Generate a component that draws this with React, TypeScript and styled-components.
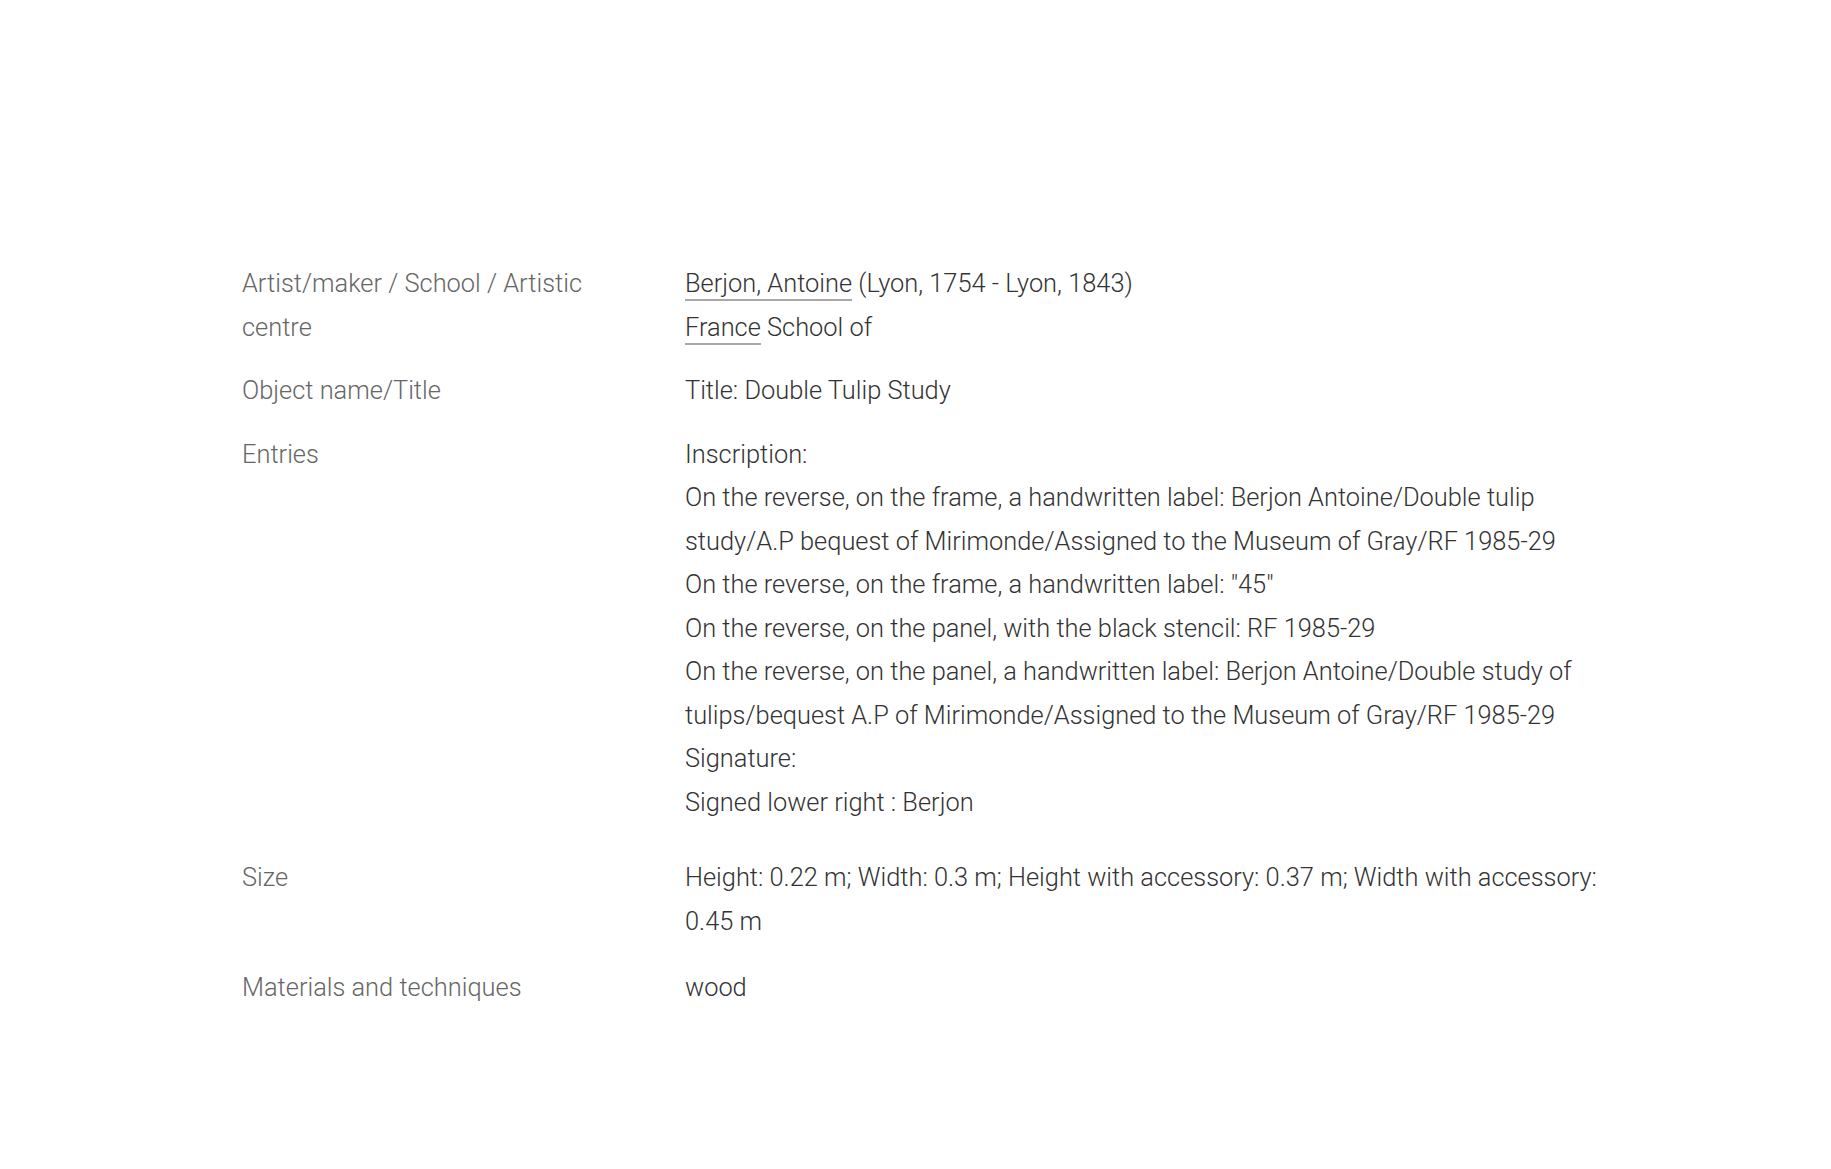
import React from 'react';
import styled, { createGlobalStyle } from 'styled-components';

const GlobalStyle = createGlobalStyle`
  html, body {
    margin: 0;
    padding: 0;
    background: #fff;
  }
  body {
    font-family: Roboto, "Liberation Sans", sans-serif;
    font-weight: 300;
  }
`

const Page = styled.main`
  min-height: 1169px;
  padding: 252px 0 0 242px;
  box-sizing: border-box;
`

const Details = styled.dl`
  display: grid;
  grid-template-columns: 443px 940px;
  margin: 0;
`

const Label = styled.dt<{ $gap?: number }>`
  margin: 0;
  padding: 10px 60px ${p => p.$gap ?? 10}px 0;
  font-size: 25.4px;
  line-height: 43.5px;
  color: #666;
`

const Value = styled.dd<{ $gap?: number }>`
  margin: 0;
  padding: 10px 0 ${p => p.$gap ?? 10}px 0;
  font-size: 25.4px;
  line-height: 43.5px;
  color: #333;
`

const Line = styled.div``

const Link = styled.a`
  color: inherit;
  text-decoration: none;
  border-bottom: 2px solid #a8a8a8;
  padding-bottom: 1px;
`

type Row = { label: string, value: React.ReactNode, gap?: number }

const rows: Row[] = [
  {
    label: 'Artist/maker / School / Artistic centre',
    value: (
      <>
        <Line><Link href="#">Berjon, Antoine</Link> (Lyon, 1754 - Lyon, 1843)</Line>
        <Line><Link href="#">France</Link> School of</Line>
      </>
    ),
  },
  { label: 'Object name/Title', value: 'Title: Double Tulip Study' },
  {
    label: 'Entries',
    gap: 22,
    value: (
      <>
        <Line>Inscription:</Line>
        <Line>On the reverse, on the frame, a handwritten label: Berjon Antoine/Double tulip study/A.P bequest of Mirimonde/Assigned to the Museum of Gray/RF 1985-29</Line>
        <Line>On the reverse, on the frame, a handwritten label: "45"</Line>
        <Line>On the reverse, on the panel, with the black stencil: RF 1985-29</Line>
        <Line>On the reverse, on the panel, a handwritten label: Berjon Antoine/Double study of tulips/bequest A.P of Mirimonde/Assigned to the Museum of Gray/RF 1985-29</Line>
        <Line>Signature:</Line>
        <Line>Signed lower right : Berjon</Line>
      </>
    ),
  },
  {
    label: 'Size',
    gap: 13,
    value: 'Height: 0.22 m; Width: 0.3 m; Height with accessory: 0.37 m; Width with accessory: 0.45 m',
  },
  { label: 'Materials and techniques', value: 'wood' },
]

const App = () => {
  return (
    <Page>
      <GlobalStyle />
      <Details>
        {rows.map(row => (
          <React.Fragment key={row.label}>
            <Label $gap={row.gap}>{row.label}</Label>
            <Value $gap={row.gap}>{row.value}</Value>
          </React.Fragment>
        ))}
      </Details>
    </Page>
  )
}

export default App;
